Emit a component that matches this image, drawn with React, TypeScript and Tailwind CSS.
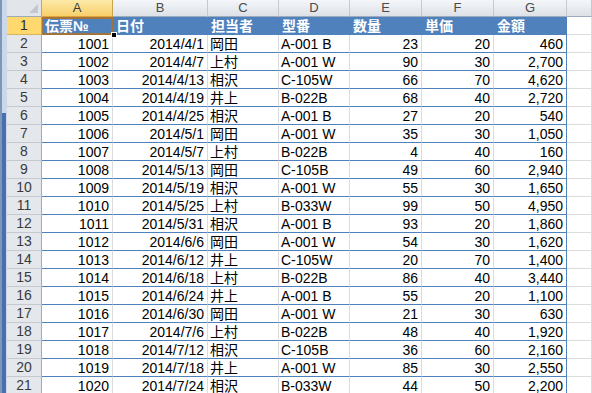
import React from 'react';

type Row = [string, string, string, string, string, string, string];

const rows: Row[] = [
  ['1001', '2014/4/1', '岡田', 'A-001 B', '23', '20', '460'],
  ['1002', '2014/4/7', '上村', 'A-001 W', '90', '30', '2,700'],
  ['1003', '2014/4/13', '相沢', 'C-105W', '66', '70', '4,620'],
  ['1004', '2014/4/19', '井上', 'B-022B', '68', '40', '2,720'],
  ['1005', '2014/4/25', '相沢', 'A-001 B', '27', '20', '540'],
  ['1006', '2014/5/1', '岡田', 'A-001 W', '35', '30', '1,050'],
  ['1007', '2014/5/7', '上村', 'B-022B', '4', '40', '160'],
  ['1008', '2014/5/13', '岡田', 'C-105B', '49', '60', '2,940'],
  ['1009', '2014/5/19', '相沢', 'A-001 W', '55', '30', '1,650'],
  ['1010', '2014/5/25', '上村', 'B-033W', '99', '50', '4,950'],
  ['1011', '2014/5/31', '相沢', 'A-001 B', '93', '20', '1,860'],
  ['1012', '2014/6/6', '岡田', 'A-001 W', '54', '30', '1,620'],
  ['1013', '2014/6/12', '井上', 'C-105W', '20', '70', '1,400'],
  ['1014', '2014/6/18', '上村', 'B-022B', '86', '40', '3,440'],
  ['1015', '2014/6/24', '井上', 'A-001 B', '55', '20', '1,100'],
  ['1016', '2014/6/30', '岡田', 'A-001 W', '21', '30', '630'],
  ['1017', '2014/7/6', '上村', 'B-022B', '48', '40', '1,920'],
  ['1018', '2014/7/12', '相沢', 'C-105B', '36', '60', '2,160'],
  ['1019', '2014/7/18', '井上', 'A-001 W', '85', '30', '2,550'],
  ['1020', '2014/7/24', '相沢', 'B-033W', '44', '50', '2,200'],
];

const headings = ['伝票№', '日付', '担当者', '型番', '数量', '単価', '金額'];
const letters = ['A', 'B', 'C', 'D', 'E', 'F', 'G', ''];
// which columns are right aligned in the data rows
const rightAligned = [true, true, false, false, true, true, true];

function ColumnHeader({ letter, selected }: { letter: string; selected: boolean }) {
  return (
    <div
      className={
        selected
          ? 'flex h-[17px] items-center justify-center border-r border-b border-r-[#c9a24f] border-b-[#e2a23a] bg-gradient-to-b from-[#fdeaa8] to-[#f8cf6a] text-[13px] text-[#3c3c3c]'
          : 'flex h-[17px] items-center justify-center border-r border-b border-r-[#c5c9cf] border-b-[#9eabbb] bg-gradient-to-b from-[#f4f6f9] to-[#dde2e8] text-[13px] text-[#4a4a4a]'
      }
    >
      {letter}
    </div>
  );
}

function RowHeader({ n, selected }: { n: number; selected?: boolean }) {
  return (
    <div
      className={
        selected
          ? 'flex h-[18px] items-center justify-center border-r border-b border-r-[#e2a23a] border-b-[#d9b25e] bg-[#ffd86e] text-[14px] text-[#2c2c2c]'
          : 'flex h-[18px] items-center justify-center border-r border-b border-r-[#9eabbb] border-b-[#c5c9cf] bg-[#e4e8ed] text-[14px] text-[#3a3a3a]'
      }
    >
      {n}
    </div>
  );
}

export default function App() {
  return (
    <div className="flex h-[393px] w-[592px] overflow-hidden bg-white font-['Liberation_Sans','Noto_Sans_CJK_JP',sans-serif]">
      <div className="flex w-[7px] shrink-0">
        <div className="w-[2px] bg-[#7d96b9]" />
        <div className="flex w-[4px] flex-col">
          <div className="h-[113px] bg-[#cbd8ea]" />
          <div className="flex-1 bg-[#4671ad]" />
        </div>
        <div className="w-[1px] bg-[#cbd8ea]" />
      </div>

      <div className="flex min-w-0 flex-1 flex-col">
        <div className="h-[3px] bg-[#f2f3f5]" />
        <div className="grid grid-cols-[35px_71px_95px_71px_71px_72px_72px_73px_1fr]">
          {/* select all corner */}
          <div className="relative h-[17px] border-r border-b border-r-[#9eabbb] border-b-[#9eabbb] bg-[#e2e6eb]">
            <svg className="absolute right-[3px] bottom-[3px]" width="9" height="9" viewBox="0 0 9 9">
              <polygon points="9,0 9,9 0,9" fill="#c3c8cf" />
            </svg>
          </div>
          {letters.map((l, i) => (
            <ColumnHeader key={i} letter={l} selected={i === 0} />
          ))}

          {/* row 1: table heading */}
          <RowHeader n={1} selected />
          {headings.map((h, i) => (
            <div
              key={h}
              className={
                'relative flex h-[18px] items-center bg-[#4f81bd] px-[3px] text-[14px] font-bold text-white' +
                (i === 6 ? ' border-r border-r-[#4f81bd]' : '')
              }
            >
              {h}
              {i === 0 && (
                <>
                  <div className="pointer-events-none absolute inset-0 border-2 border-[#a2733a]" />
                  <div className="absolute right-[-4px] bottom-[-3px] z-10 h-[6px] w-[6px] border border-white bg-black" />
                </>
              )}
            </div>
          ))}
          <div className="h-[18px] border-r border-b border-[#dadcdf]" />

          {rows.map((r, ri) => (
            <React.Fragment key={r[0]}>
              <RowHeader n={ri + 2} />
              {r.map((v, ci) => (
                <div
                  key={ci}
                  className={
                    'flex h-[18px] items-center border-r border-b border-b-[#4f81bd] pt-[1px] text-[14px] text-black ' +
                    (ci === 6 ? 'border-r-[#4f81bd] ' : 'border-r-[#d9dbde] ') +
                    (rightAligned[ci] ? 'justify-end pr-[3px]' : 'pl-[2px]')
                  }
                >
                  {v}
                </div>
              ))}
              <div className="h-[18px] border-r border-b border-[#dadcdf]" />
            </React.Fragment>
          ))}
        </div>
      </div>
    </div>
  );
}
